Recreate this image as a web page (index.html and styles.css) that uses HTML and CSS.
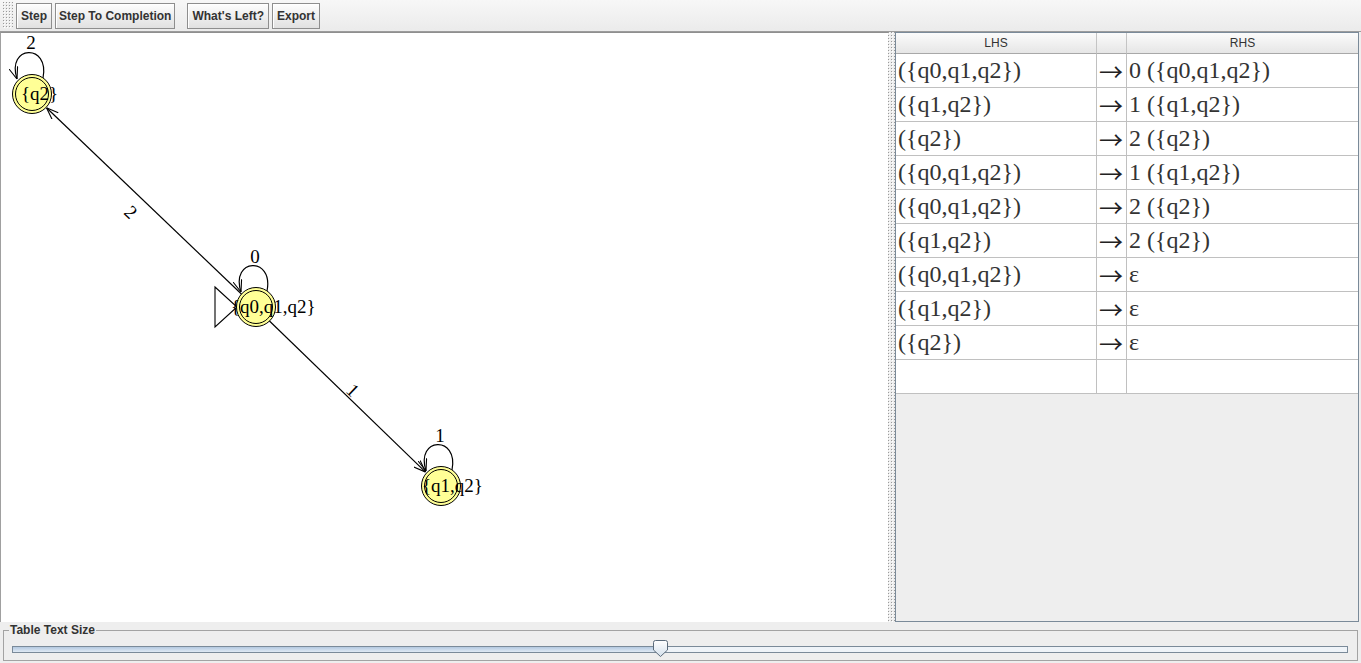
FILE: index.html
```html
<!DOCTYPE html>
<html>
<head>
<meta charset="utf-8">
<title>Grammar Converter</title>
<link rel="stylesheet" href="styles.css">
</head>
<body>
<div class="toolbar">
  <div class="grip"></div>
  <button class="btn">Step</button>
  <button class="btn btn-long">Step To Completion</button>
  <span class="tsep"></span>
  <button class="btn">What's Left?</button>
  <button class="btn">Export</button>
</div>
<div class="main">
  <div class="canvas">
    <svg class="graph" width="887" height="589" viewBox="1 33 887 589">
      <defs>
        <marker id="arr" viewBox="0 0 12 10" refX="12" refY="5" markerWidth="12" markerHeight="10" markerUnits="userSpaceOnUse" orient="auto">
          <path d="M0,0.5 L12,5 L0,9.5" fill="none" stroke="#000" stroke-width="1.1"/>
        </marker>
      </defs>
      <g class="edges">
        <line x1="255" y1="307" x2="46.5" y2="107.8" marker-end="url(#arr)"/>
        <line x1="255" y1="307" x2="425.6" y2="472.1" marker-end="url(#arr)"/>
        <path d="M43,78 C50,43 6,45 17,79" marker-end="url(#arr)"/>
        <path d="M267,291 C274,256 230,258 241,292" marker-end="url(#arr)"/>
        <path d="M452,470 C459,435 415,437 426,471" marker-end="url(#arr)"/>
      </g>
      <g class="elabels">
        <text x="131" y="212" dy="0.35em" transform="rotate(44 131 212)">2</text>
        <text x="353" y="390" dy="0.35em" transform="rotate(44 353 390)">1</text>
        <text x="31" y="49">2</text>
        <text x="255" y="263">0</text>
        <text x="440" y="442">1</text>
      </g>
      <polygon class="start" points="215,287 237,307 215,327"/>
      <g class="node">
        <circle cx="32" cy="94" r="19.5"/>
        <circle class="inner" cx="32" cy="94" r="16.5"/>
        <text x="21" y="100">{q2}</text>
      </g>
      <g class="node">
        <circle cx="256" cy="307" r="19.5"/>
        <circle class="inner" cx="256" cy="307" r="16.5"/>
        <text x="231" y="313">{q0,q1,q2}</text>
      </g>
      <g class="node">
        <circle cx="441" cy="486" r="19.5"/>
        <circle class="inner" cx="441" cy="486" r="16.5"/>
        <text x="422" y="492">{q1,q2}</text>
      </g>
    </svg>
  </div>
  <div class="splitter"></div>
  <div class="panel">
    <table class="grammar">
      <colgroup><col class="c-lhs"><col class="c-arrow"><col class="c-rhs"></colgroup>
      <thead>
        <tr><th>LHS</th><th></th><th>RHS</th></tr>
      </thead>
      <tbody>
        <tr><td>({q0,q1,q2})</td><td class="arrow">→</td><td>0 ({q0,q1,q2})</td></tr>
        <tr><td>({q1,q2})</td><td class="arrow">→</td><td>1 ({q1,q2})</td></tr>
        <tr><td>({q2})</td><td class="arrow">→</td><td>2 ({q2})</td></tr>
        <tr><td>({q0,q1,q2})</td><td class="arrow">→</td><td>1 ({q1,q2})</td></tr>
        <tr><td>({q0,q1,q2})</td><td class="arrow">→</td><td>2 ({q2})</td></tr>
        <tr><td>({q1,q2})</td><td class="arrow">→</td><td>2 ({q2})</td></tr>
        <tr><td>({q0,q1,q2})</td><td class="arrow">→</td><td>ε</td></tr>
        <tr><td>({q1,q2})</td><td class="arrow">→</td><td>ε</td></tr>
        <tr><td>({q2})</td><td class="arrow">→</td><td>ε</td></tr>
        <tr><td></td><td></td><td></td></tr>
      </tbody>
    </table>
  </div>
</div>
<div class="bottom">
  <fieldset class="titled">
    <legend>Table Text Size</legend>
    <div class="slider">
      <div class="track"><div class="fill" style="width:48.5%"></div></div>
      <svg class="thumb" style="left:calc(48.5% - 7px)" width="15" height="17" viewBox="0 0 15 17">
        <defs>
          <linearGradient id="tg" x1="0" y1="0" x2="0" y2="1">
            <stop offset="0" stop-color="#ffffff"/>
            <stop offset="1" stop-color="#d4e0ec"/>
          </linearGradient>
        </defs>
        <path d="M2.5,0.5 H12.5 Q14.5,0.5 14.5,2.5 V10 L7.5,16.5 L0.5,10 V2.5 Q0.5,0.5 2.5,0.5 Z" fill="url(#tg)" stroke="#5b6b7b"/>
      </svg>
    </div>
  </fieldset>
</div>
</body>
</html>
```
FILE: styles.css
```css
* { box-sizing: border-box; }
html, body { margin: 0; padding: 0; }
body {
  width: 1361px;
  height: 663px;
  overflow: hidden;
  background: #eeeeee;
  font-family: "Liberation Sans", Arial, sans-serif;
}

/* toolbar */
.toolbar {
  height: 32px;
  display: flex;
  align-items: center;
  gap: 3px;
  padding-left: 3px;
  background: linear-gradient(#f7f7f7, #ebebeb);
  border-bottom: 1px solid #9c9c9c;
}
.grip, .splitter {
  background-color: #eeeeee;
  background-image:
    conic-gradient(from 270deg at 1px 1px, #9a9a9a 25%, transparent 0),
    conic-gradient(from 270deg at 1px 1px, #ffffff 25%, transparent 0);
  background-size: 3px 3px, 3px 3px;
  background-position: 0 0, 1px 1px;
}
.grip {
  width: 10px;
  height: 27px;
}
.btn {
  height: 26px;
  margin: 0;
  padding: 0 4px;
  font: bold 12px "Liberation Sans", Arial, sans-serif;
  color: #333333;
  border: 1px solid #8e8e8e;
  border-radius: 0;
  background: linear-gradient(#fefefe 0%, #f0f0f0 45%, #e1e1e1 100%);
  box-shadow: inset 1px 1px 0 #ffffff;
}
.btn-long { padding: 0 3px; }
.tsep { width: 6px; }

/* main area */
.main {
  display: flex;
  height: 590px;
}
.canvas {
  width: 888px;
  background: #ffffff;
  border-left: 1px solid #a0a0a0;
  border-top: 1px solid #8f8f8f;
}
.graph { display: block; }
.edges line, .edges path {
  fill: none;
  stroke: #000000;
  stroke-width: 1.2;
}
.elabels text, .node text {
  font-family: "Liberation Serif", "Times New Roman", serif;
  font-size: 19px;
  fill: #000000;
}
.elabels text { text-anchor: middle; }
.start { fill: #ffffff; stroke: #000000; stroke-width: 1.1; }
.node circle { fill: #ffff96; stroke: #000000; stroke-width: 1; }
.node circle.inner { fill: none; }

.splitter { width: 7px; }

.panel {
  width: 464px;
  margin-right: 2px;
  border: 1px solid #7a8a99;
  background: #eeeeee;
}
.grammar {
  width: 462px;
  table-layout: fixed;
  border-collapse: separate;
  border-spacing: 0;
  background: #ffffff;
}
.c-lhs { width: 201px; }
.c-arrow { width: 30px; }
.c-rhs { width: 231px; }
.grammar th {
  height: 21px;
  padding: 0;
  font: normal 12px/20px "Liberation Sans", Arial, sans-serif;
  color: #333333;
  text-align: center;
  background: linear-gradient(#fbfbfb, #e6e6e6);
  border-right: 1px solid #c4c4c4;
  border-bottom: 1px solid #a8a8a8;
}
.grammar td {
  padding: 0 2px;
  font-family: "Liberation Serif", "Times New Roman", serif;
  font-size: 24px;
  line-height: 33px;
  height: 34px;
  color: #333333;
  white-space: nowrap;
  overflow: hidden;
  border-right: 1px solid #c0c0c0;
  border-bottom: 1px solid #c0c0c0;
}
.grammar td.arrow {
  padding: 0 2px;
  font-family: "Noto Sans CJK SC", "Liberation Serif", sans-serif;
  font-size: 24px;
  color: #222222;
}
.grammar th:last-child, .grammar td:last-child { border-right: none; }

/* bottom slider */
.bottom {
  height: 41px;
  padding: 1px 3px 2px 3px;
}
.titled {
  margin: 0;
  padding: 0;
  min-width: 0;
  height: 38px;
  border: 1px solid #a3a3a3;
}
.titled legend {
  margin-left: 5px;
  padding: 0 1px;
  font: bold 12px/14px "Liberation Sans", Arial, sans-serif;
  color: #333333;
}
.slider {
  position: relative;
  margin: 9px 9px 0 8px;
  height: 7px;
}
.track {
  height: 7px;
  border: 1px solid #7a8a99;
  background: #eef3f8;
  display: flex;
}
.fill {
  background: linear-gradient(#b4c9e0, #dfe9f4);
}
.thumb {
  position: absolute;
  top: -6px;
  display: block;
}
```
